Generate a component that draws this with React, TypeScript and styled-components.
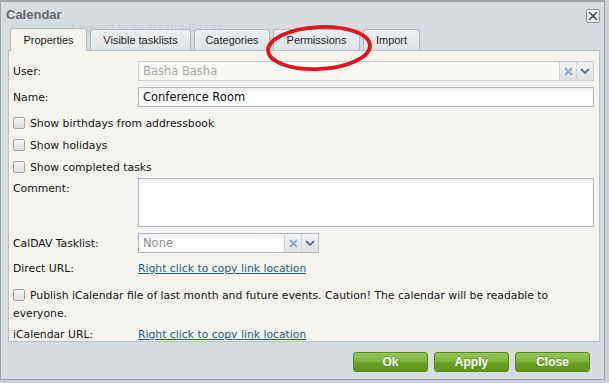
import * as React from 'react';
import styled, { createGlobalStyle } from 'styled-components';

const GlobalStyle = createGlobalStyle`
  html, body {
    margin: 0;
    padding: 0;
    background: #cbd2d7;
  }
  body {
    font-family: "DejaVu Sans", Tahoma, sans-serif;
  }
`;

const Page = styled.div`
  position: relative;
  width: 609px;
  height: 383px;
  overflow: hidden;
  background: #cbd2d7;
`;

const Window = styled.div`
  position: relative;
  box-sizing: border-box;
  width: 605px;
  height: 380px;
  padding: 0 4px 0 7px;

  display: flex;
  flex-direction: column;

  background: #d6dce0;
  border: 1px solid #9ba3a9;
  border-top: 2px solid #a3a3a3;
`;

const Ghost = styled.div`
  position: absolute;
  top: 19px;
  left: 70px;

  font-family: "Liberation Sans", Arial, sans-serif;
  font-size: 12px;
  font-weight: bold;
  color: rgba(90, 100, 110, 0.1);
`;

const TitleBar = styled.div`
  height: 25px;
  display: flex;
  align-items: center;
  justify-content: space-between;
`;

const Title = styled.span`
  margin-left: -2px;

  font-family: "Liberation Sans", Arial, sans-serif;
  font-size: 13px;
  font-weight: bold;
  color: #62686d;
`;

const CloseButton = styled.div`
  box-sizing: border-box;
  width: 14px;
  height: 14px;
  margin-top: 2px;

  display: flex;
  align-items: center;
  justify-content: center;

  background: linear-gradient(#ffffff, #eceeef);
  border: 1px solid #8f9498;
  border-radius: 2px;
`;

const TabStrip = styled.div`
  height: 23px;
  padding-left: 2px;

  display: flex;
  align-items: flex-end;
  gap: 3px;
`;

const Tab = styled.div<{ $active?: boolean; $w: number }>`
  position: relative;
  z-index: ${p => (p.$active ? 2 : 1)};
  box-sizing: border-box;
  width: ${p => p.$w}px;
  height: ${p => (p.$active ? 23 : 21)}px;
  margin-bottom: ${p => (p.$active ? -1 : 0)}px;

  display: flex;
  align-items: center;
  justify-content: center;

  background: ${p => (p.$active ? '#f5f4ef' : 'linear-gradient(#edf0f2, #dfe4e8)')};
  border: 1px solid ${p => (p.$active ? '#b3bcc2' : '#aeb8bf')};
  border-bottom: none;
  border-radius: 3px 3px 0 0;

  font-family: "Liberation Sans", Arial, sans-serif;
  font-size: 11px;
  color: #1e1e1e;
`;

const Panel = styled.div`
  box-sizing: border-box;
  height: 292px;
  padding: 10px 5px 0 4px;
  overflow: hidden;

  display: flex;
  flex-direction: column;

  background: #f5f4ef;
  border: 1px solid #b7c0c6;
  font-size: 10.8px;
  color: #161616;
`;

const Row = styled.div<{ $top?: number; $h?: number; $start?: boolean }>`
  height: ${p => p.$h ?? 20}px;
  margin-top: ${p => p.$top ?? 0}px;
  flex: none;

  display: flex;
  align-items: ${p => (p.$start ? 'flex-start' : 'center')};
`;

const Label = styled.span<{ $pad?: number }>`
  width: 125px;
  flex: none;
  padding-top: ${p => p.$pad ?? 0}px;
`;

const Combo = styled.div<{ $w?: number; $disabled?: boolean }>`
  box-sizing: border-box;
  height: 100%;
  ${p => (p.$w ? `width: ${p.$w}px;` : 'flex: 1;')}

  display: flex;
  align-items: stretch;

  background: ${p => (p.$disabled ? '#faf9f6' : 'linear-gradient(#eef0f3, #ffffff 5px)')};
  border: 1px solid ${p => (p.$disabled ? '#c9cdd6' : '#b3b8c8')};
`;

const FieldText = styled.span<{ $muted?: boolean; $faint?: boolean }>`
  flex: 1;
  padding: 0 4px;
  display: flex;
  align-items: center;
  font-size: 11.5px;
  color: ${p => (p.$faint ? '#aaaaaa' : p.$muted ? '#8f8f8f' : '#111111')};
`;

const Trigger = styled.span`
  width: 16px;
  flex: none;

  display: flex;
  align-items: center;
  justify-content: center;

  background: linear-gradient(#f1f2f3, #dfe2e5);
  border-left: 1px solid #d0d3d8;
`;

const TextArea = styled.div`
  box-sizing: border-box;
  flex: 1;
  height: 100%;
  background: linear-gradient(#eef0f3, #ffffff 6px);
  border: 1px solid #b3b8c8;
`;

const Box = styled.span`
  box-sizing: border-box;
  display: inline-block;
  width: 12px;
  height: 12px;
  margin-right: 5px;
  flex: none;
  vertical-align: -2px;

  background: linear-gradient(#f7f7f7, #dedede);
  border: 1px solid #a4a4a4;
  border-radius: 2px;
`;

const Link = styled.a`
  color: #245e86;
  text-decoration: underline;
  cursor: pointer;
`;

const Paragraph = styled.div`
  margin-top: 9px;
  flex: none;
  line-height: 18px;
`;

const Footer = styled.div`
  padding: 10px 10px 0 0;
  display: flex;
  justify-content: flex-end;
  gap: 6px;
`;

const Button = styled.div`
  box-sizing: border-box;
  width: 75px;
  height: 20px;

  display: flex;
  align-items: center;
  justify-content: center;

  background: linear-gradient(#97c65a 0%, #7fb43c 45%, #68a022 55%, #5c9617 100%);
  border: 1px solid #548a17;
  border-radius: 3px;

  font-family: "Liberation Sans", Arial, sans-serif;
  font-size: 12px;
  font-weight: bold;
  color: #ffffff;
  text-shadow: 0 -1px 0 rgba(40, 80, 0, 0.35);
`;

const Mark = styled.svg`
  position: absolute;
  z-index: 5;
  left: 262px;
  top: 21px;
  pointer-events: none;
`;

const ClearIcon = () => (
  <svg width="9" height="9" viewBox="0 0 9 9">
    <path d="M1 1L8 8M8 1L1 8" stroke="#8eaac6" strokeWidth="1.8" />
  </svg>
);

const DownIcon = () => (
  <svg width="10" height="6" viewBox="0 0 10 6">
    <path d="M1 1L5 5L9 1" stroke="#5f6f98" strokeWidth="1.8" fill="none" />
  </svg>
);

const tabs = [
  { label: 'Properties', w: 77, active: true },
  { label: 'Visible tasklists', w: 101 },
  { label: 'Categories', w: 76 },
  { label: 'Permissions', w: 87 },
  { label: 'Import', w: 57 },
];

const App: React.FC = () => {
  return (
    <Page>
      <GlobalStyle />
      <Window>
        <Ghost>Logged in as Basha Basha</Ghost>
        <TitleBar>
          <Title>Calendar</Title>
          <CloseButton>
            <svg width="10" height="10" viewBox="0 0 10 10">
              <path d="M1 1L9 9M9 1L1 9" stroke="#3a3a3a" strokeWidth="1.4" />
            </svg>
          </CloseButton>
        </TitleBar>

        <TabStrip>
          {tabs.map(t => (
            <Tab key={t.label} $w={t.w} $active={t.active}>{t.label}</Tab>
          ))}
        </TabStrip>

        <Panel>
          <Row>
            <Label>User:</Label>
            <Combo $disabled>
              <FieldText $faint>Basha Basha</FieldText>
              <Trigger><ClearIcon /></Trigger>
              <Trigger><DownIcon /></Trigger>
            </Combo>
          </Row>

          <Row $top={6}>
            <Label>Name:</Label>
            <Combo>
              <FieldText>Conference Room</FieldText>
            </Combo>
          </Row>

          <Row $top={5} $h={22}><Box />Show birthdays from addressbook</Row>
          <Row $h={22}><Box />Show holidays</Row>
          <Row $h={22}><Box />Show completed tasks</Row>

          <Row $h={49} $start>
            <Label $pad={4}>Comment:</Label>
            <TextArea />
          </Row>

          <Row $top={6}>
            <Label>CalDAV Tasklist:</Label>
            <Combo $w={181}>
              <FieldText $muted>None</FieldText>
              <Trigger><ClearIcon /></Trigger>
              <Trigger><DownIcon /></Trigger>
            </Combo>
          </Row>

          <Row $top={5}>
            <Label>Direct URL:</Label>
            <Link>Right click to copy link location</Link>
          </Row>

          <Paragraph>
            <Box />Publish iCalendar file of last month and future events. Caution! The calendar will be readable to everyone.
          </Paragraph>

          <Row $top={1}>
            <Label>iCalendar URL:</Label>
            <Link>Right click to copy link location</Link>
          </Row>
        </Panel>

        <Footer>
          <Button>Ok</Button>
          <Button>Apply</Button>
          <Button>Close</Button>
        </Footer>

        <Mark width="112" height="52" viewBox="0 0 112 52">
          <ellipse cx="56" cy="25" rx="51" ry="21" fill="none" stroke="#e3141d" strokeWidth="3.8" transform="rotate(-3 56 25)" />
        </Mark>
      </Window>
    </Page>
  );
};

export default App;
